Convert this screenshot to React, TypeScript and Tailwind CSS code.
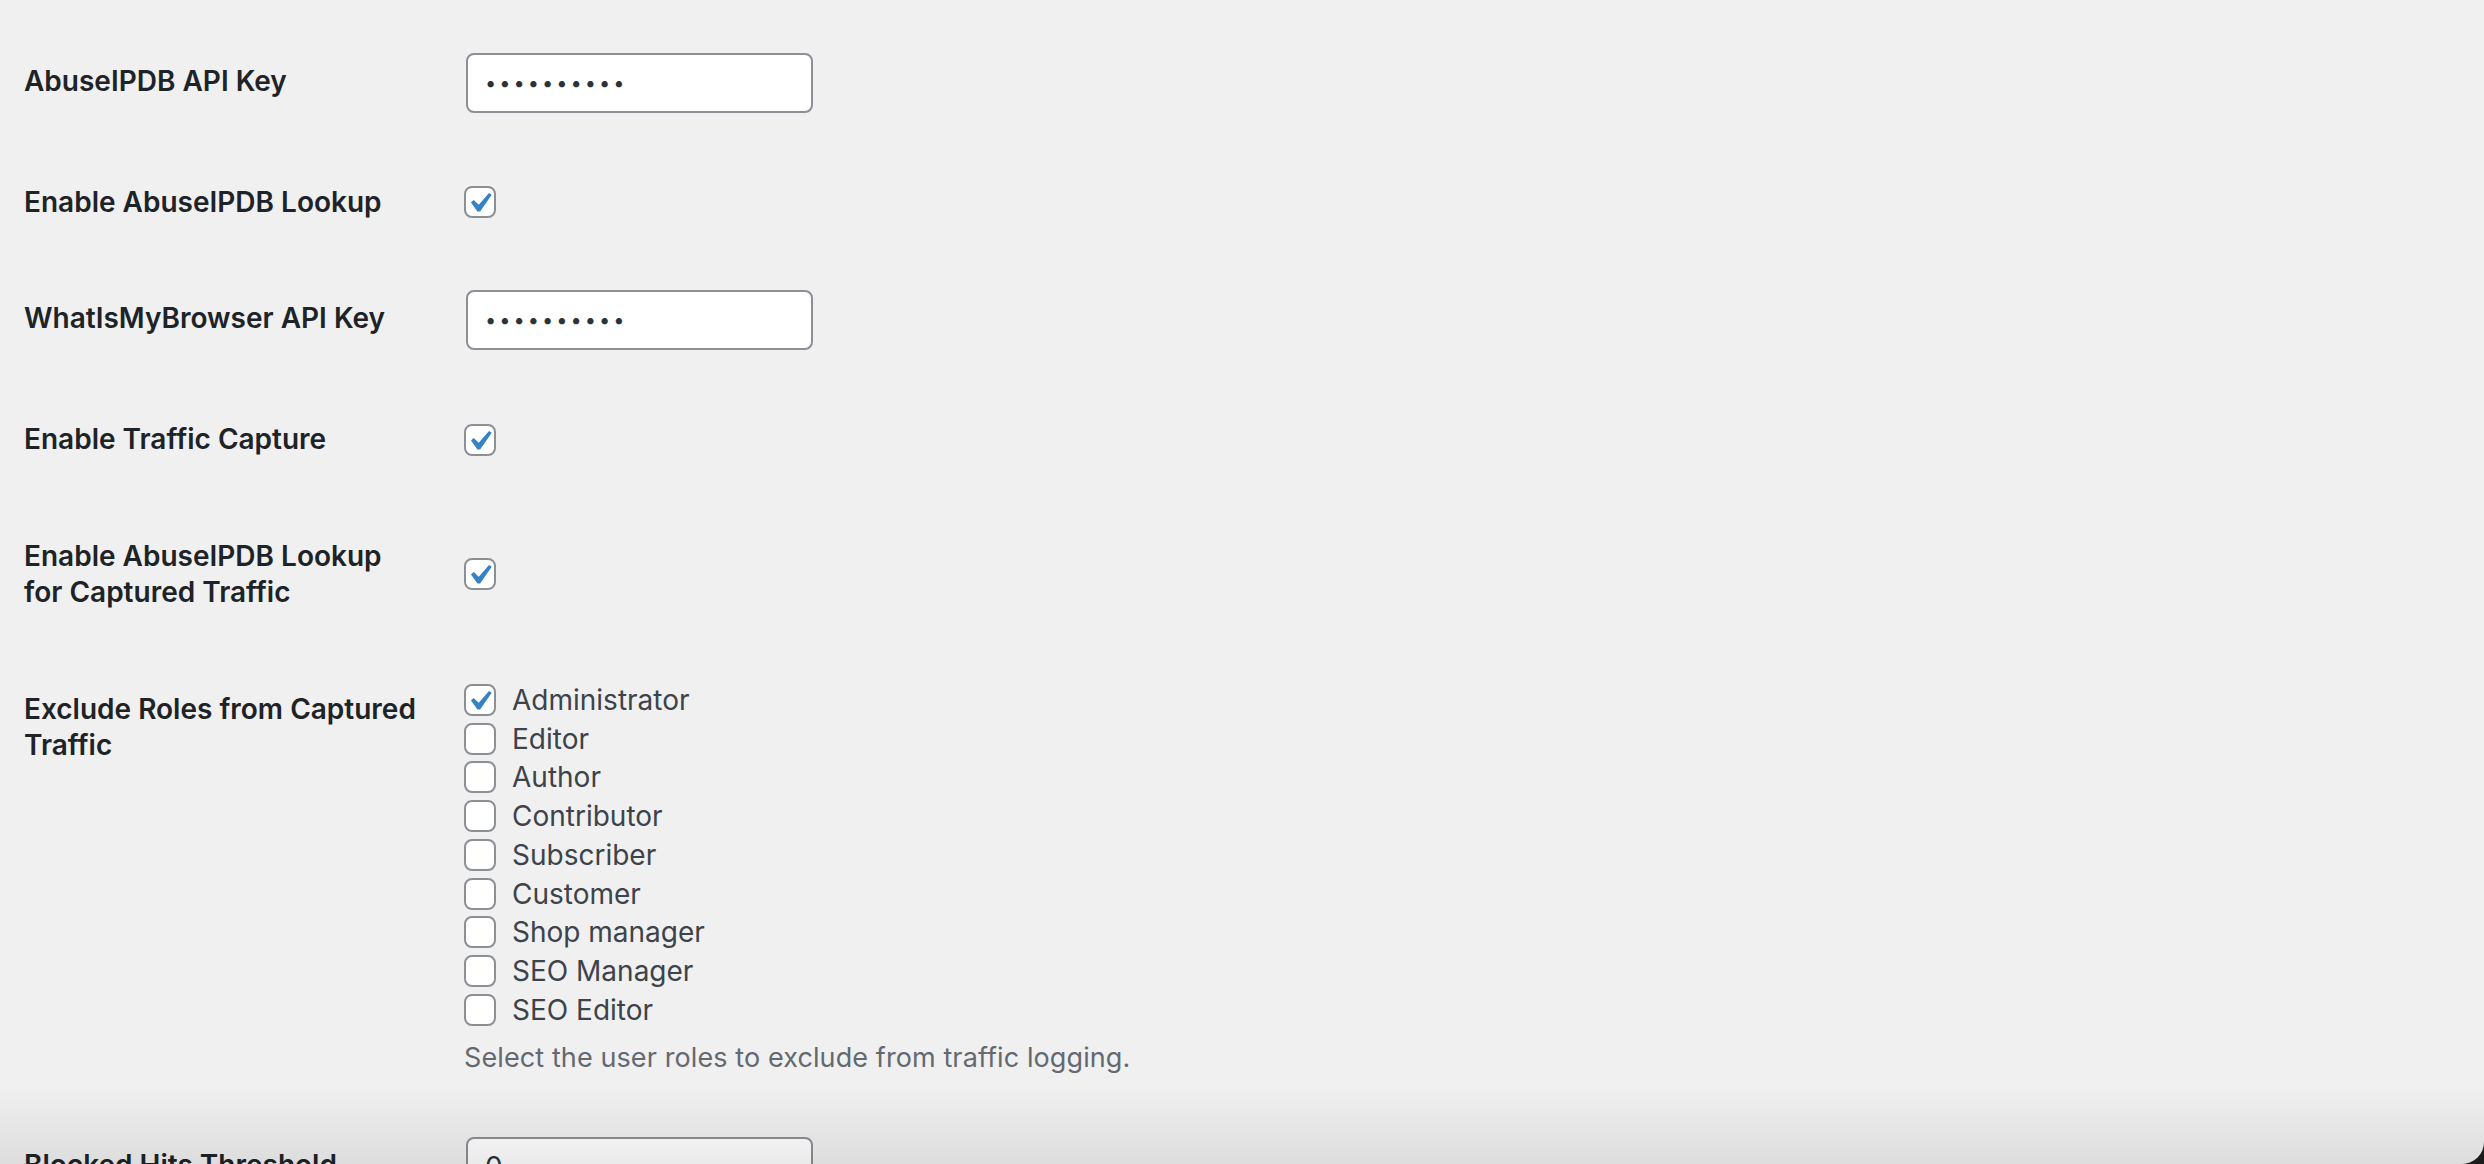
import type { ReactNode } from "react";

const roles = [
  { name: "Administrator", checked: true },
  { name: "Editor" },
  { name: "Author" },
  { name: "Contributor" },
  { name: "Subscriber" },
  { name: "Customer" },
  { name: "Shop manager" },
  { name: "SEO Manager" },
  { name: "SEO Editor" },
];

const Checkbox = ({ checked }: { checked?: boolean }) => (
  <span className="relative inline-block w-[32px] h-[32px] shrink-0 rounded-[8px] border-2 border-[#8c8f94] bg-white">
    {checked && (
      <svg className="absolute -left-[2px] -top-[2px] w-[32px] h-[32px]" viewBox="2.3 1.4 16 16">
        <path d="M14.83 4.89l1.34.94-5.81 8.38H9.02L5.78 9.67l1.34-1.25 2.57 2.4z" fill="#3582c4" />
      </svg>
    )}
  </span>
);

const Row = ({ label, children }: { label: ReactNode; children: ReactNode }) => (
  <div className="flex">
    <div className="w-[420px] shrink-0 pr-[20px] py-[40px] text-[28px] leading-[1.3] font-semibold text-[#1d2327]">
      {label}
    </div>
    <div className="flex flex-col justify-center px-[20px] py-[30px]">{children}</div>
  </div>
);

const TextInput = ({ value, password }: { value: string; password?: boolean }) => (
  <input
    type={password ? "password" : "text"}
    defaultValue={value}
    readOnly
    className={
      "ml-[2px] mb-[1px] w-[347px] h-[60px] rounded-[8px] border-2 border-[#8c8f94] bg-white px-[17px] text-[#2c3338] outline-none " +
      (password ? "text-[20px] tracking-[3px]" : "text-[28px]")
    }
  />
);

const App = () => {
  return (
    <div className="w-full h-screen bg-[#1c1c1c] font-[family-name:Inter,sans-serif]">
      <div className="relative h-full overflow-hidden rounded-br-[22px] bg-[#f0f0f1]">
        <div className="pl-[24px] pt-[23px]">
          <Row label="AbuseIPDB API Key">
            <TextInput value="0123456789" password />
          </Row>
          <Row label="Enable AbuseIPDB Lookup">
            <Checkbox checked />
          </Row>
          <Row label="WhatIsMyBrowser API Key">
            <TextInput value="0123456789" password />
          </Row>
          <Row label="Enable Traffic Capture">
            <Checkbox checked />
          </Row>
          <Row
            label={
              <>
                Enable AbuseIPDB Lookup
                <br />
                for Captured Traffic
              </>
            }
          >
            <Checkbox checked />
          </Row>
          <Row
            label={
              <>
                Exclude Roles from Captured
                <br />
                Traffic
              </>
            }
          >
            <fieldset className="flex flex-col">
              {roles.map((r) => (
                <label key={r.name} className="flex items-center gap-[16px] h-[38.75px] text-[28px] text-[#3c434a]">
                  <Checkbox checked={r.checked} />
                  {r.name}
                </label>
              ))}
            </fieldset>
            <p className="mt-[9px] text-[27px] tracking-[0.1px] leading-[1.45] text-[#646970]">
              Select the user roles to exclude from traffic logging.
            </p>
          </Row>
          <Row label="Blocked Hits Threshold">
            <TextInput value="0" />
          </Row>
        </div>
        <div className="pointer-events-none absolute inset-x-0 bottom-0 h-[80px] bg-linear-to-b from-black/0 to-black/[0.08]" />
      </div>
    </div>
  );
};

export default App;
